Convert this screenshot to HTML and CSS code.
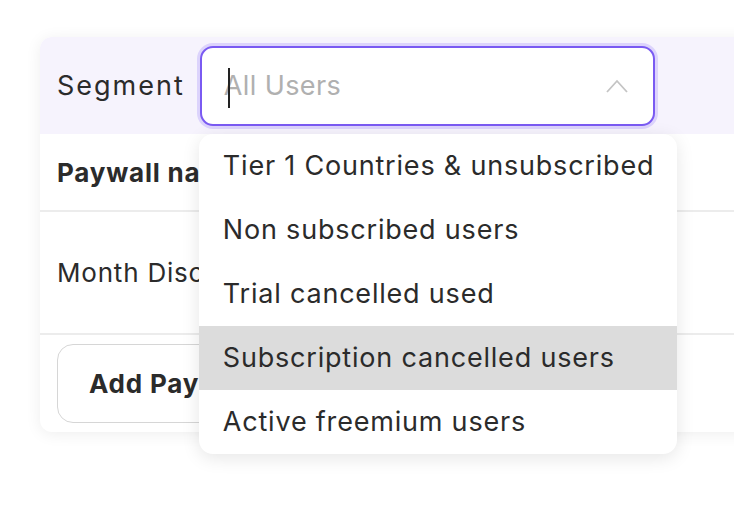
FILE: index.html
```html
<!DOCTYPE html>
<html>
<head>
<meta charset="utf-8">
<link rel="stylesheet" href="styles.css">
</head>
<body>
<div class="page">
<div class="card">
  <div class="header">
    <span class="label">Segment</span>
    <div class="select-wrap">
      <div class="select">
        <span class="placeholder">All Users</span>
        <span class="caret"></span>
        <svg class="chevron" width="22" height="14" viewBox="0 0 22 14"><path d="M1 13 L11 2 L21 13" fill="none" stroke="#c4c4c4" stroke-width="1.8"/></svg>
      </div>
      <ul class="menu">
        <li class="item">Tier 1 Countries &amp; unsubscribed</li>
        <li class="item">Non subscribed users</li>
        <li class="item">Trial cancelled used</li>
        <li class="item active">Subscription cancelled users</li>
        <li class="item">Active freemium users</li>
      </ul>
    </div>
  </div>
  <div class="row row-title"><span class="bold">Paywall name</span></div>
  <div class="row row-main"><span>Month Discount</span></div>
  <div class="row row-btn"><button class="btn">Add Paywall</button></div>
</div>
</div>
</body>
</html>
```
FILE: styles.css
```css
html, body { margin: 0; padding: 0; background: #fff; }
body { font-family: "Inter", "Open Sans", sans-serif; color: #2b2b2b; }
.page { width: 734px; height: 510px; overflow: hidden; padding-top: 37px; box-sizing: border-box; }
.card {
  margin-left: 40px;
  width: 760px;
  background: #fff;
  border-radius: 12px;
  box-shadow: 0 2px 16px rgba(0,0,0,0.07);
}
.header {
  height: 97px;
  background: #f6f3fd;
  border-radius: 12px 0 0 0;
  display: flex;
  align-items: center;
  padding-left: 17px;
  gap: 15px;
}
.label { font-size: 27px; letter-spacing: 2px; color: #2b2b2b; }
.select-wrap { position: relative; }
.select {
  position: relative;
  box-sizing: border-box;
  width: 455px;
  height: 80px;
  background: #fff;
  border: 2px solid #7a5af2;
  border-radius: 13px;
  box-shadow: 0 0 0 3px #dcd3fc;
  display: flex;
  align-items: center;
  padding: 0 24px 0 22px;
  justify-content: space-between;
}
.placeholder { font-size: 27px; letter-spacing: 0.4px; color: #b0b0b0; }
.caret { position: absolute; left: 26px; top: 20px; width: 2px; height: 40px; background: #222; }
.chevron { margin-right: 1px; }
.menu {
  position: absolute;
  top: 88px;
  left: -1px;
  width: 478px;
  margin: 0; padding: 0;
  list-style: none;
  background: #fff;
  border-radius: 14px;
  overflow: hidden;
  box-shadow: 0 4px 18px rgba(0,0,0,0.10);
  z-index: 5;
}
.item { height: 64px; display: flex; align-items: center; padding-left: 24px; font-size: 27px; letter-spacing: 0.8px; color: #2b2b2b; white-space: nowrap; }
.item.active { background: #dcdcdc; }
.row { display: flex; align-items: center; padding-left: 17px; font-size: 26px; letter-spacing: 0.8px; border-bottom: 2px solid #ececec; }
.row-title { height: 76px; }
.row-main { height: 121px; }
.row-btn { height: 97px; border-bottom: none; }
.bold { font-weight: 700; }
.btn {
  font-family: inherit;
  font-size: 26px;
  letter-spacing: 0.8px;
  font-weight: 700;
  color: #2b2b2b;
  background: #fff;
  border: 1.5px solid #d6d6d6;
  border-radius: 16px;
  height: 79px;
  width: 260px;
  text-align: left;
  padding-left: 31px;
}
```
